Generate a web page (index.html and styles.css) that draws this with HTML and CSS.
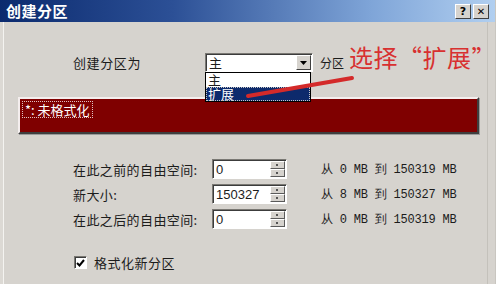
FILE: index.html
```html
<!DOCTYPE html>
<html>
<head>
<meta charset="utf-8">
<link rel="stylesheet" href="styles.css">
</head>
<body>
<div class="window">
  <div class="titlebar">
    <span class="title">创建分区</span>
    <div class="tbtns">
      <span class="tbtn">?</span>
      <span class="tbtn x">✕</span>
    </div>
  </div>
  <div class="content">
    <div class="row-type">
      <span class="lbl-type">创建分区为</span>
      <div class="combo">
        <span class="combo-val">主</span>
        <span class="combo-btn"><svg width="7" height="4" viewBox="0 0 7 4"><path d="M0 0H7L3.5 4Z" fill="#000"/></svg></span>
        <div class="droplist">
          <div class="opt">主</div>
          <div class="opt sel">扩展</div>
        </div>
      </div>
      <span class="lbl-part">分区</span>
    </div>
    <div class="bar">
      <span class="bar-item">*: 未格式化</span>
    </div>
    <div class="fields">
      <div class="frow">
        <span class="flbl">在此之前的自由空间:</span>
        <div class="spin"><span class="sval">0</span><span class="sbtns"><i></i><i></i></span></div>
        <span class="range">从 0 MB 到 150319 MB</span>
      </div>
      <div class="frow">
        <span class="flbl">新大小:</span>
        <div class="spin"><span class="sval">150327</span><span class="sbtns"><i></i><i></i></span></div>
        <span class="range">从 8 MB 到 150327 MB</span>
      </div>
      <div class="frow">
        <span class="flbl">在此之后的自由空间:</span>
        <div class="spin"><span class="sval">0</span><span class="sbtns"><i></i><i></i></span></div>
        <span class="range">从 0 MB 到 150319 MB</span>
      </div>
    </div>
    <div class="chkrow">
      <span class="chk"><svg width="9" height="8" viewBox="0 0 9 8"><path d="M1 4L3.5 6.5L8 1" stroke="#000" stroke-width="2" fill="none"/></svg></span>
      <span class="chklbl">格式化新分区</span>
    </div>
  </div>
  <div class="annot">选择“扩展”</div>
  <svg class="arrow" width="496" height="284" viewBox="0 0 496 284"><path d="M248 96 L352 78" stroke="#d42a2a" stroke-width="4" stroke-linecap="round"/></svg>
</div>
</body>
</html>
```

FILE: styles.css
```css
* { box-sizing: border-box; }
html, body { margin: 0; padding: 0; }
body {
  width: 496px; height: 284px; overflow: hidden;
  font-family: "Noto Sans CJK SC", "DejaVu Sans", sans-serif;
  font-size: 13px; color: #1c1c1c;
  background: #d6d3ce;
}
.window {
  position: relative;
  width: 496px; height: 284px;
  background: #d6d3ce;
  border-left: 3px solid #dcd9d4;
  border-right: 1px solid #c9c6c0;
  display: flex; flex-direction: column;
}
.window::before {
  content: ""; position: absolute; left: 0; top: 22px; bottom: 0; width: 1px; background: #f4f3f0;
}
.window::after {
  content: ""; position: absolute; right: 7px; top: 22px; bottom: 0; width: 1px; background: #c4c1bb;
}
.titlebar {
  height: 22px;
  margin-left: -3px;
  background: linear-gradient(to right, #0b2a6e 0%, #2c5096 35%, #7fa5d8 75%, #b1cff0 100%);
  display: flex; align-items: center; justify-content: space-between;
  padding: 0 6px 0 6px;
}
.title { color: #fff; font-weight: bold; font-size: 15px; letter-spacing: 0.5px; line-height: 22px; }
.tbtns { display: flex; gap: 2px; }
.tbtn {
  width: 16px; height: 15px;
  background: #d6d3ce;
  border: 1px solid; border-color: #fff #404040 #404040 #fff;
  font: bold 11px/13px "DejaVu Sans", sans-serif; color: #000;
  text-align: center;
}
.tbtn.x { font-size: 10px; }
.content { flex: 1; padding: 31px 0 0 0; }
.row-type { display: flex; align-items: center; height: 19px; }
.lbl-type { margin-left: 70px; width: 132px; letter-spacing: 0.6px; }
.combo {
  position: relative;
  width: 108px; height: 19px;
  background: #fff;
  border: 1px solid; border-color: #7a7873 #fff #fff #7a7873;
  box-shadow: inset 1px 1px 0 #3c3c3c;
  display: flex; align-items: center; justify-content: space-between;
}
.combo-val { padding-left: 3px; line-height: 16px; }
.combo-btn {
  width: 15px; height: 15px; margin-right: 1px;
  background: #d6d3ce;
  border: 1px solid; border-color: #fff #404040 #404040 #fff;
  display: flex; align-items: center; justify-content: center;
}
.droplist {
  position: absolute; left: -1px; top: 18px; width: 106px;
  background: #fff; border: 1px solid #000;
  z-index: 3;
}
.opt { height: 14px; line-height: 14px; padding-left: 2px; }
.opt.sel { background: #0d2a6c; color: #fff; outline: 1px dotted #c7c7c7; outline-offset: -1px; }
.lbl-part { margin-left: 7px; font-size: 12px; }
.bar {
  margin: 25px 0 0 15px;
  width: 461px; height: 37px;
  background: #7f0000;
  border: 2px solid; border-color: #f4eeee #3e3e3e #3e3e3e #f4eeee;
  box-shadow: 1px 1px 0 #9a9a9a;
  padding: 1px 0 0 3px;
}
.bar-item {
  display: inline-block; color: #fff;
  padding: 0 2px; line-height: 15px;
  outline: 1px dotted #e0c0c0;
}
.fields { margin: 25px 0 0 70px; display: flex; flex-direction: column; gap: 5px; }
.frow { display: flex; align-items: center; height: 20px; }
.flbl { width: 139px; letter-spacing: 0.4px; }
.spin {
  width: 75px; height: 20px; background: #fff;
  border: 1px solid; border-color: #7a7873 #fff #fff #7a7873;
  box-shadow: inset 1px 1px 0 #3c3c3c;
  display: flex; align-items: center; justify-content: space-between;
}
.sval { padding-left: 3px; font-family: "Liberation Sans", sans-serif; font-size: 13px; }
.sbtns { display: flex; flex-direction: column; width: 15px; height: 16px; margin-right: 1px; }
.sbtns i {
  flex: 1; background: #d6d3ce;
  border: 1px solid; border-color: #fff #5a5a5a #5a5a5a #fff;
  position: relative;
}
.sbtns i::after { content: ""; position: absolute; left: 5px; top: 2px; width: 2px; height: 2px; background: #555; }
.range { margin-left: 34px; font-family: "Liberation Mono", monospace; font-size: 12px; letter-spacing: -0.2px; }
.chkrow { display: flex; align-items: center; margin: 24px 0 0 71px; }
.chk {
  width: 13px; height: 13px; background: #fff;
  border: 1px solid; border-color: #7a7873 #fff #fff #7a7873;
  box-shadow: inset 1px 1px 0 #3c3c3c;
  display: flex; align-items: center; justify-content: center;
}
.chklbl { margin-left: 7px; letter-spacing: 0.5px; }
.annot {
  position: absolute; left: 346px; top: 42px;
  color: #d83030; font-size: 24px; line-height: 30px; letter-spacing: 0.5px;
  font-family: "Noto Sans CJK SC", sans-serif; z-index: 4;
}
.arrow { position: absolute; left: -3px; top: 0; z-index: 5; pointer-events: none; }
```
